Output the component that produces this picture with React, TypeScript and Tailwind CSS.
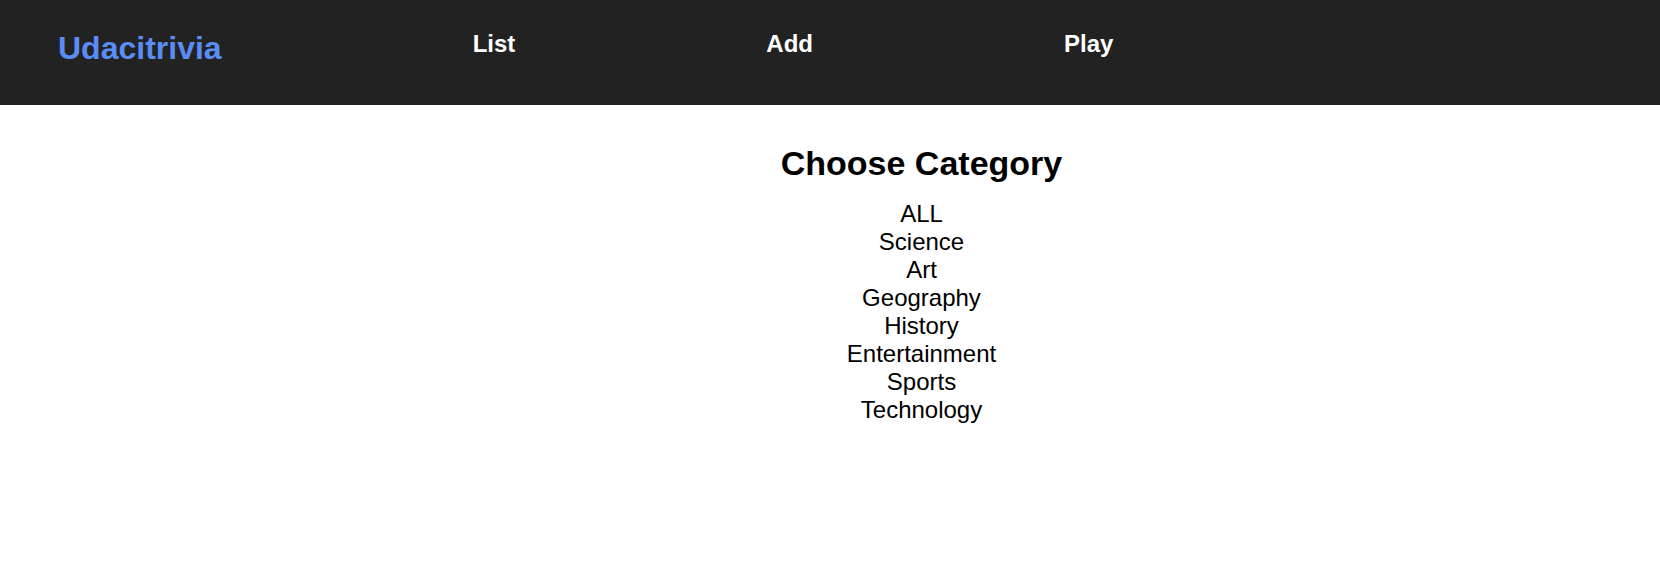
import React from 'react'

const categories = [
  'ALL',
  'Science',
  'Art',
  'Geography',
  'History',
  'Entertainment',
  'Sports',
  'Technology',
]

const navItems = ['List', 'Add', 'Play']

const Header: React.FC = () => {
  return (
    <header className="flex items-start h-[105px] bg-[#222222] pt-[30px] pl-[58px] gap-[251px]">
      <h1 className="text-[32px] leading-[37px] font-bold text-[#5a8cf6] cursor-pointer">
        Udacitrivia
      </h1>
      {navItems.map((item) => (
        <h2
          key={item}
          className="text-[24px] leading-[28px] font-bold text-white cursor-pointer"
        >
          {item}
        </h2>
      ))}
    </header>
  )
}

const App: React.FC = () => {
  return (
    <div className="min-h-[584px] bg-white font-['Liberation_Sans',Arial,sans-serif]">
      <Header />
      <main className="flex flex-col items-center pt-[39px] pl-[183px]">
        <h2 className="text-[34px] leading-[39px] font-bold text-black">
          Choose Category
        </h2>
        <ul className="mt-[17px] flex flex-col items-center">
          {categories.map((cat) => (
            <li
              key={cat}
              className="text-[24px] leading-[28px] text-black cursor-pointer"
            >
              {cat}
            </li>
          ))}
        </ul>
      </main>
    </div>
  )
}

export default App
